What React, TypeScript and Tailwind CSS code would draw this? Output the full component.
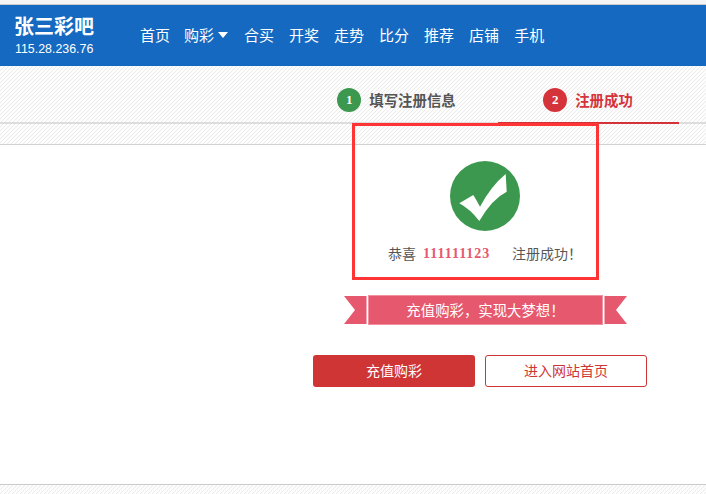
const navItems = ["合买", "开奖", "走势", "比分", "推荐", "店铺", "手机"];

const stripes =
  "bg-[linear-gradient(135deg,#ebebeb_12.5%,#fdfdfd_12.5%,#fdfdfd_50%,#ebebeb_50%,#ebebeb_62.5%,#fdfdfd_62.5%,#fdfdfd_100%)] bg-[length:4px_4px]";

function Header() {
  return (
    <header className="flex h-[61px] shrink-0 items-center bg-[#1569c1] pl-[15px] text-white">
      <div className="-mt-[1px] w-[125px]">
        <div className="-ml-[1px] text-[20px] leading-[25px] font-bold">张三彩吧</div>
        <div className="mt-[2px] text-[12.4px] leading-[18px] font-['Liberation_Sans',sans-serif]">115.28.236.76</div>
      </div>
      <nav className="-mt-[2px] flex items-center gap-[15px] text-[15px] leading-[20px]">
        <a>首页</a>
        <a className="-ml-[1px] mr-[1px] flex items-center gap-[4px]">
          购彩
          <svg width="10" height="6" viewBox="0 0 10 6">
            <path d="M0 0H10L5 6Z" fill="#fff" />
          </svg>
        </a>
        {navItems.map((item) => (
          <a key={item}>{item}</a>
        ))}
      </nav>
    </header>
  );
}

function Steps() {
  return (
    <section className={`h-[79px] shrink-0 border-b border-[#d2d2d2] ${stripes}`}>
      <div className="box-content h-[56px] border-b-2 border-[#dddddd]">
        <div className="ml-[306px] flex h-[56px] gap-[11px]">
          <div className="flex w-[181px] items-center justify-center gap-[8px] pt-[12px] text-[14.4px] font-bold text-[#555555]">
            <span className="flex h-[24px] w-[24px] items-center justify-center rounded-full bg-[#3c984e] text-[13px] text-white font-['Liberation_Serif',serif]">1</span>
            填写注册信息
          </div>
          <div className="flex h-[58px] w-[181px] items-center justify-center gap-[8px] border-b-2 border-[#d5333a] pr-[1px] pt-[12px] text-[14.4px] font-bold text-[#d5333a]">
            <span className="flex h-[24px] w-[24px] items-center justify-center rounded-full bg-[#d5333a] text-[13px] text-white font-['Liberation_Serif',serif]">2</span>
            注册成功
          </div>
        </div>
      </div>
    </section>
  );
}

function SuccessIcon() {
  return (
    <svg width="70" height="70" viewBox="0 0 70 70">
      <circle cx="35" cy="35" r="35" fill="#3c984e" />
      <path
        d="M9.3 42.3L23.3 34Q27 40 30 45.7Q41 25 55.7 13L56.7 30.7Q42 38 29.3 60Q20 48 9.3 42.3Z"
        fill="#fff"
      />
    </svg>
  );
}

function Ribbon() {
  return (
    <div className="ml-[344px] mt-[31px] flex h-[30px] items-center">
      <svg width="24" height="30" viewBox="0 0 24 30" className="shrink-0">
        <path d="M0 1H22.5V29H0L11 15Z" fill="#e6586e" />
      </svg>
      <div className="flex h-[30px] w-[235px] items-center justify-center border border-[#f0929f] bg-[#e6586e] text-[14.4px] text-white">
        充值购彩，实现大梦想！
      </div>
      <svg width="24" height="30" viewBox="0 0 24 30" className="ml-px shrink-0">
        <path d="M0.5 1H23L12 15L23 29H0.5Z" fill="#e6586e" />
      </svg>
    </div>
  );
}

export default function App() {
  return (
    <div className="relative flex h-[494px] w-[706px] flex-col overflow-hidden bg-white font-['Noto_Sans_CJK_SC','Liberation_Sans',sans-serif]">
      <div className="h-[5px] shrink-0 border-b border-[#cccccc] bg-[#f4f4f4]" />
      <Header />
      <Steps />

      <main className="h-[339px] shrink-0">
        <div className="ml-[450px] mt-[16px] h-[70px] w-[70px]">
          <SuccessIcon />
        </div>
        <div className="ml-[388px] mt-[11px] flex h-[22px] items-center text-[14px] text-[#555555]">
          <span>恭喜</span>
          <span className="ml-[7px] w-[89px] text-[14px] tracking-[1px] font-bold text-[#e6586e] font-['Liberation_Serif',serif]">111111123</span>
          <span>注册成功！</span>
        </div>
        <Ribbon />
        <div className="ml-[313px] mt-[30px] flex gap-[10px] text-[14px]">
          <button className="h-[32px] w-[162px] rounded-[3px] bg-[#cf3535] pb-[2px] text-white">充值购彩</button>
          <button className="h-[32px] w-[162px] rounded-[3px] border border-[#cf3535] bg-white pb-[2px] text-[#cf3535]">进入网站首页</button>
        </div>
      </main>

      <div className={`grow border-t border-[#cccccc] ${stripes}`} />

      {/* annotation drawn over the page */}
      <div className="absolute left-[352px] top-[123px] h-[157px] w-[247px] border-[3px] border-[#ff3535]" />
    </div>
  );
}
